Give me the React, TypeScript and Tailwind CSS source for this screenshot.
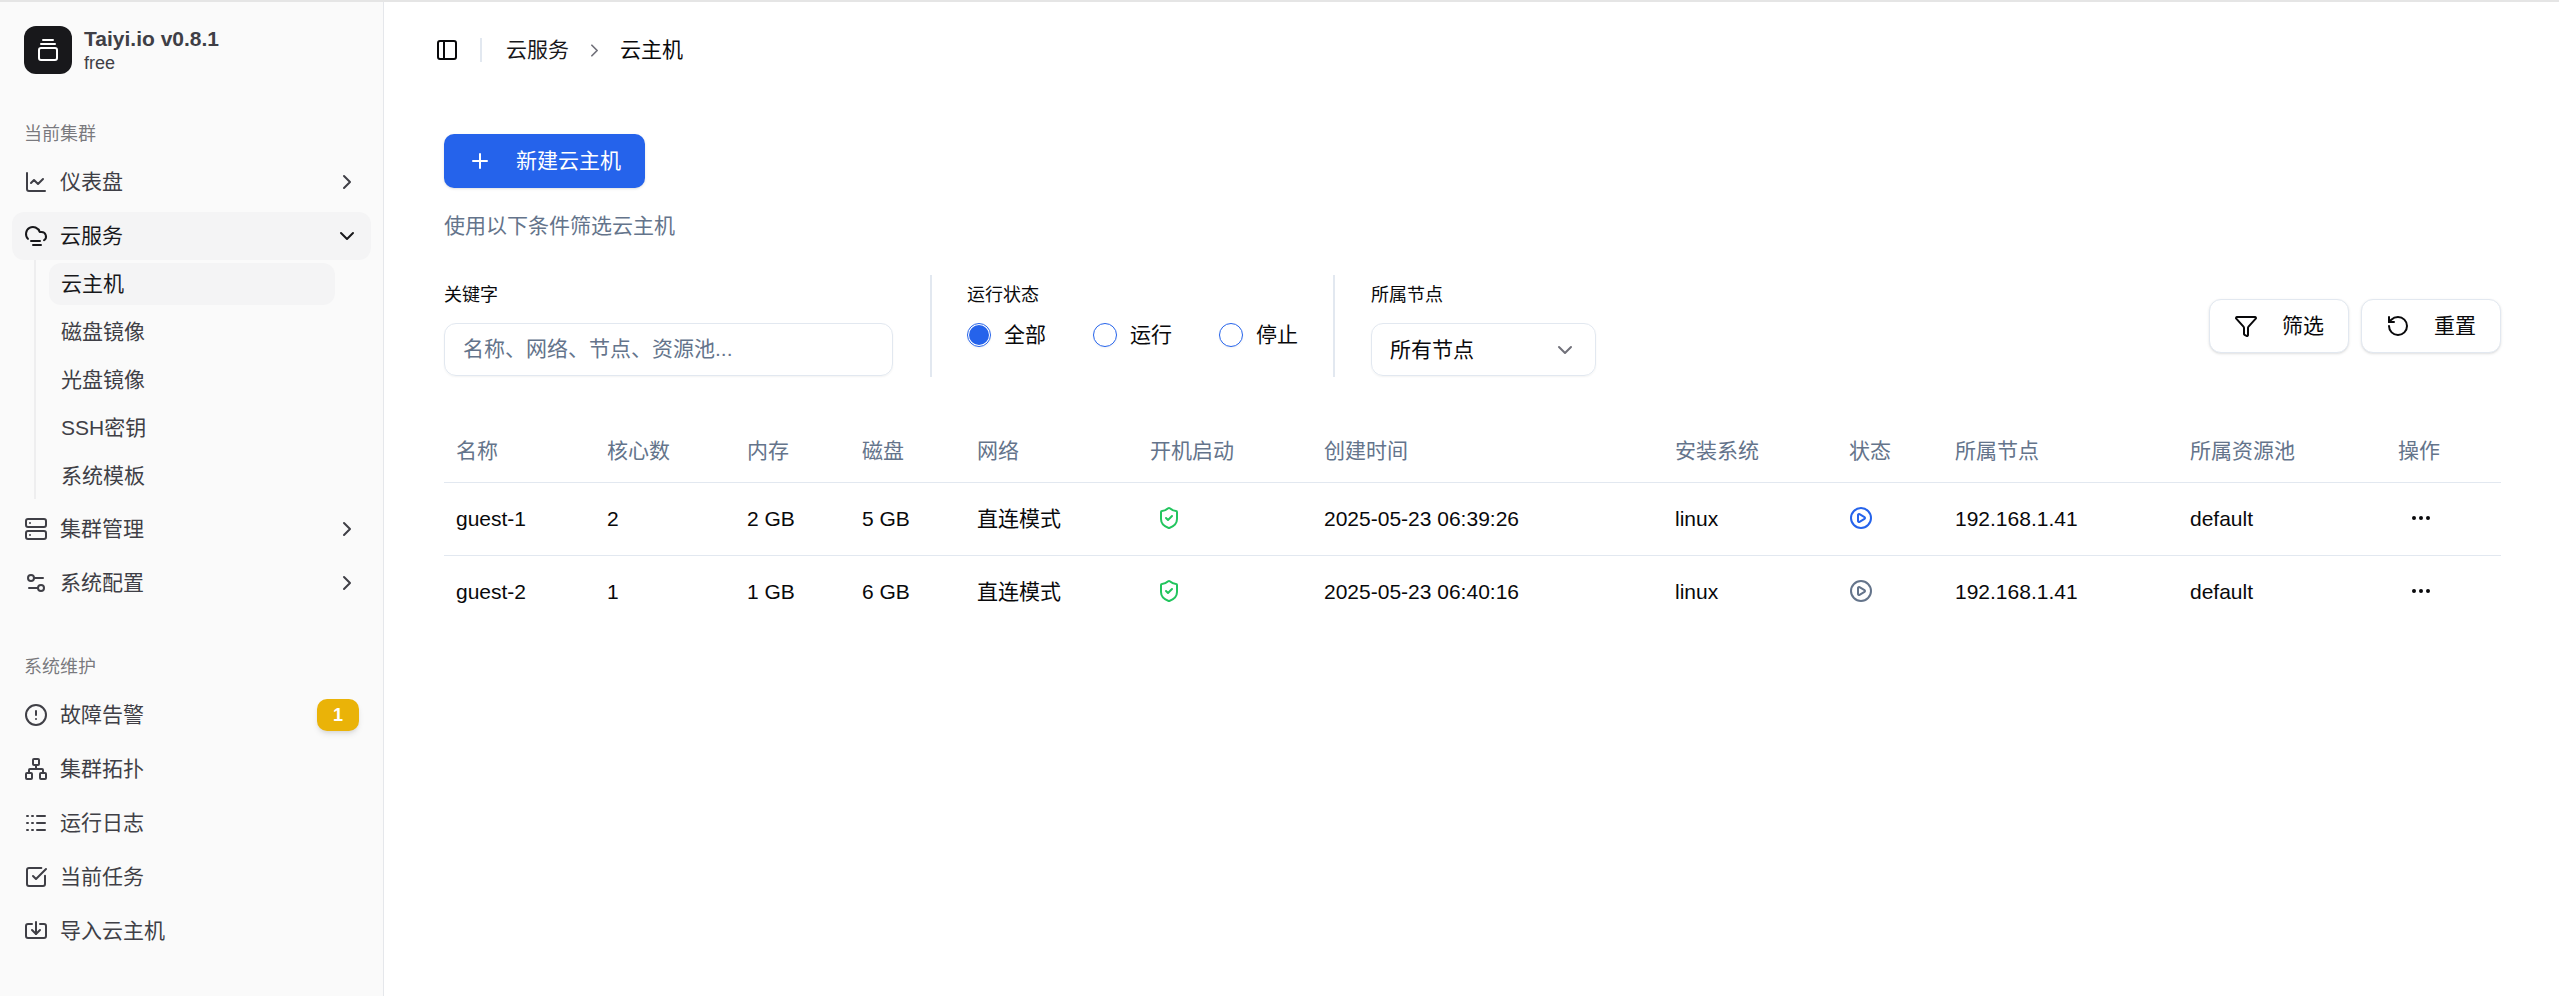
import {
  ChartLine,
  ChevronDown,
  ChevronRight,
  CircleAlert,
  CirclePlay,
  CloudFog,
  Ellipsis,
  Funnel,
  GalleryVerticalEnd,
  Import,
  Logs,
  Network,
  PanelLeft,
  Plus,
  RotateCcw,
  Server,
  Settings2,
  ShieldCheck,
  SquareCheckBig,
} from "lucide-react";
import type { ComponentType } from "react";

type Icon = ComponentType<{ size?: number; className?: string }>;

const subItems = ["云主机", "磁盘镜像", "光盘镜像", "SSH密钥", "系统模板"];

const columns = [
  { label: "名称", width: "w-[151px]" },
  { label: "核心数", width: "w-[140px]" },
  { label: "内存", width: "w-[115px]" },
  { label: "磁盘", width: "w-[115px]" },
  { label: "网络", width: "w-[173px]" },
  { label: "开机启动", width: "w-[174px]" },
  { label: "创建时间", width: "w-[351px]" },
  { label: "安装系统", width: "w-[174px]" },
  { label: "状态", width: "w-[106px]" },
  { label: "所属节点", width: "w-[235px]" },
  { label: "所属资源池", width: "w-[208px]" },
  { label: "操作", width: "w-[115px]" },
];

const guests = [
  { name: "guest-1", cores: 2, memory: "2 GB", disk: "5 GB", created: "2025-05-23 06:39:26", running: true },
  { name: "guest-2", cores: 1, memory: "1 GB", disk: "6 GB", created: "2025-05-23 06:40:16", running: false },
];

function NavRow({
  icon: RowIcon,
  label,
  active,
  open,
  arrow = true,
  badge,
}: {
  icon: Icon;
  label: string;
  active?: boolean;
  open?: boolean;
  arrow?: boolean;
  badge?: string;
}) {
  return (
    <div
      className={`flex h-[48px] items-center gap-[12px] rounded-[12px] px-[12px] ${
        active ? "bg-[#f4f4f5] text-[#18181b]" : "text-[#3f3f46]"
      }`}
    >
      <RowIcon size={24} className="shrink-0" />
      <span className="flex-1 text-[21px]">{label}</span>
      {badge && (
        <span className="flex h-[32px] w-[42px] items-center justify-center rounded-[10px] bg-[#eab308] text-[18px] font-bold text-white shadow-md">
          {badge}
        </span>
      )}
      {arrow && (open ? <ChevronDown size={24} /> : <ChevronRight size={24} />)}
    </div>
  );
}

function GroupLabel({ children }: { children: string }) {
  return (
    <div className="flex h-[48px] items-center px-[12px] text-[18px] text-[#3f3f46]/70">
      {children}
    </div>
  );
}

function Sidebar() {
  return (
    <aside className="flex w-[384px] shrink-0 flex-col border-r border-[#e5e7eb] bg-[#fafafa] px-[12px] pt-[24px]">
      <div className="flex h-[48px] items-center gap-[12px] px-[12px]">
        <div className="flex h-[48px] w-[48px] items-center justify-center rounded-[12px] bg-[#18181b] text-white">
          <GalleryVerticalEnd size={24} />
        </div>
        <div className="flex flex-col">
          <span className="text-[21px] leading-[26px] font-bold text-[#3f3f46]">Taiyi.io v0.8.1</span>
          <span className="text-[18px] leading-[22px] text-[#3f3f46]">free</span>
        </div>
      </div>

      <div className="mt-[36px]">
        <GroupLabel>当前集群</GroupLabel>
        <div className="flex flex-col gap-[6px]">
          <NavRow icon={ChartLine} label="仪表盘" />
          <div>
            <NavRow icon={CloudFog} label="云服务" active open />
            <div className="ml-[22px] flex flex-col gap-[6px] border-l-2 border-[#eeeeef] pb-[2px] pl-[13px] pr-[36px] pt-[3px]">
              {subItems.map((item, i) => (
                <div
                  key={item}
                  className={`flex h-[42px] items-center rounded-[12px] px-[12px] text-[21px] ${
                    i === 0 ? "bg-[#f4f4f5] text-[#18181b]" : "text-[#3f3f46]"
                  }`}
                >
                  {item}
                </div>
              ))}
            </div>
          </div>
          <NavRow icon={Server} label="集群管理" />
          <NavRow icon={Settings2} label="系统配置" />
        </div>
      </div>

      <div className="mt-[36px]">
        <GroupLabel>系统维护</GroupLabel>
        <div className="flex flex-col gap-[6px]">
          <NavRow icon={CircleAlert} label="故障告警" arrow={false} badge="1" />
          <NavRow icon={Network} label="集群拓扑" arrow={false} />
          <NavRow icon={Logs} label="运行日志" arrow={false} />
          <NavRow icon={SquareCheckBig} label="当前任务" arrow={false} />
          <NavRow icon={Import} label="导入云主机" arrow={false} />
        </div>
      </div>
    </aside>
  );
}

function Radio({ label, checked }: { label: string; checked?: boolean }) {
  return (
    <label className="flex items-center gap-[13px] text-[21px] leading-[24px] text-[#09090b]">
      <span className="flex h-[24px] w-[24px] items-center justify-center rounded-full border border-[#2563eb] shadow-xs">
        {checked && <span className="h-[20px] w-[20px] rounded-full bg-[#2563eb]" />}
      </span>
      {label}
    </label>
  );
}

function OutlineButton({ icon: ButtonIcon, label }: { icon: Icon; label: string }) {
  return (
    <button className="flex h-[54px] w-[140px] items-center gap-[24px] rounded-[12px] border border-[#e2e8f0] bg-white px-[24px] text-[21px] text-[#09090b] shadow-sm">
      <ButtonIcon size={24} className="shrink-0" />
      {label}
    </button>
  );
}

function Filters() {
  return (
    <div className="mt-[33px] flex h-[102px]">
      <div className="flex w-[449px] flex-col pt-[7px]">
        <span className="mb-[15px] text-[18px] leading-[26px] text-[#09090b]">关键字</span>
        <input
          placeholder="名称、网络、节点、资源池..."
          className="h-[53px] rounded-[12px] border border-[#e2e8f0] px-[18px] pb-[2px] text-[21px] shadow-xs outline-none placeholder:text-[#64748b]"
        />
      </div>
      <div className="ml-[37px] mr-[35px] w-[2px] bg-[#e2e8f0]" />
      <div className="flex flex-col pt-[7px]">
        <span className="mb-[15px] text-[18px] leading-[26px] text-[#09090b]">运行状态</span>
        <div className="flex gap-[47px]">
          <Radio label="全部" checked />
          <Radio label="运行" />
          <Radio label="停止" />
        </div>
      </div>
      <div className="ml-[35px] mr-[36px] w-[2px] bg-[#e2e8f0]" />
      <div className="flex flex-col pt-[7px]">
        <span className="mb-[15px] text-[18px] leading-[26px] text-[#09090b]">所属节点</span>
        <div className="flex h-[53px] w-[225px] items-center justify-between rounded-[12px] border border-[#e2e8f0] px-[18px] text-[21px] text-[#09090b] shadow-xs">
          所有节点
          <ChevronDown size={24} className="text-[#71717a]" />
        </div>
      </div>
      <div className="ml-auto mt-[24px] flex h-[54px] gap-[12px]">
        <OutlineButton icon={Funnel} label="筛选" />
        <OutlineButton icon={RotateCcw} label="重置" />
      </div>
    </div>
  );
}

function GuestTable() {
  return (
    <table className="mt-[45px] w-[2057px] table-fixed text-left text-[21px]">
      <colgroup>
        {columns.map((col) => (
          <col key={col.label} className={col.width} />
        ))}
      </colgroup>
      <thead>
        <tr className="h-[60px] border-b border-[#e2e8f0] text-[#64748b]">
          {columns.map((col) => (
            <th key={col.label} className="px-[12px] pb-[2px] font-normal">
              {col.label}
            </th>
          ))}
        </tr>
      </thead>
      <tbody className="text-[#09090b]">
        {guests.map((guest, i) => (
          <tr key={guest.name} className={`h-[73px] ${i === 0 ? "border-b border-[#e2e8f0]" : ""}`}>
            <td className="px-[12px]">{guest.name}</td>
            <td className="px-[12px]">{guest.cores}</td>
            <td className="px-[12px]">{guest.memory}</td>
            <td className="px-[12px]">{guest.disk}</td>
            <td className="px-[12px]">直连模式</td>
            <td className="px-[12px]">
              <ShieldCheck size={24} className="-mt-[2px] ml-[7px] text-[#22c55e]" />
            </td>
            <td className="px-[12px]">{guest.created}</td>
            <td className="px-[12px]">linux</td>
            <td className="px-[12px]">
              <CirclePlay
                size={24}
                className={`-mt-[2px] ${guest.running ? "text-[#2563eb]" : "text-[#64748b]"}`}
              />
            </td>
            <td className="px-[12px]">192.168.1.41</td>
            <td className="px-[12px]">default</td>
            <td className="px-[12px]">
              <Ellipsis size={24} className="-mt-[2px] ml-[11px]" />
            </td>
          </tr>
        ))}
      </tbody>
    </table>
  );
}

export default function App() {
  return (
    <div className="flex h-[996px] w-full flex-col overflow-hidden bg-white [font-family:'Liberation_Sans','Noto_Sans_CJK_SC',sans-serif]">
      <div className="h-[2px] shrink-0 bg-[#e5e5e5]" />
      <div className="flex min-h-0 flex-1">
        <Sidebar />
        <main className="flex-1">
          <header className="flex h-[96px] items-center pl-[51px]">
            <PanelLeft size={24} className="text-[#09090b]" />
            <div className="ml-[21px] mr-[24px] h-[24px] w-[2px] bg-[#e2e8f0]" />
            <span className="text-[21px] text-[#18181b]">云服务</span>
            <ChevronRight size={21} className="mx-[15px] text-[#71717a]" />
            <span className="text-[21px] text-[#09090b]">云主机</span>
          </header>
          <div className="pl-[60px] pr-[58px] pt-[36px]">
            <button className="flex h-[54px] items-center gap-[24px] rounded-[10px] bg-[#2563eb] px-[24px] text-[21px] text-white shadow-sm">
              <Plus size={24} />
              新建云主机
            </button>
            <p className="mt-[22px] text-[21px] leading-[32px] text-[#64748b]">使用以下条件筛选云主机</p>
            <Filters />
            <GuestTable />
          </div>
        </main>
      </div>
    </div>
  );
}
